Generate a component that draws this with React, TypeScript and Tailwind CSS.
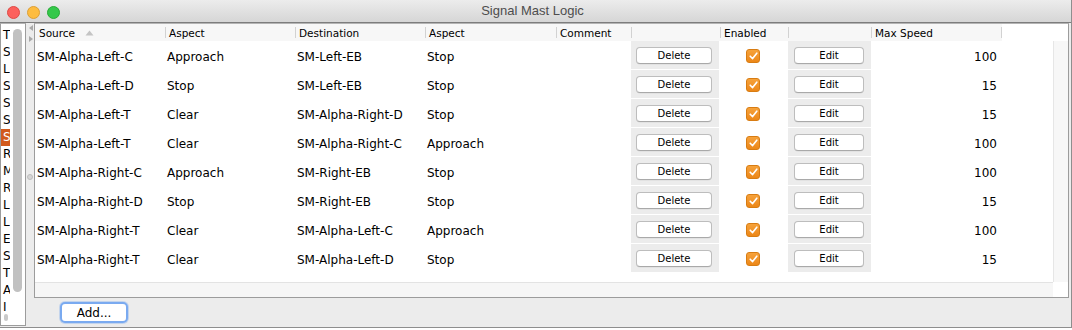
import React from "react";

interface Logic {
  source: string;
  srcAspect: string;
  dest: string;
  destAspect: string;
  speed: number;
}

const rows: Logic[] = [
  { source: "SM-Alpha-Left-C", srcAspect: "Approach", dest: "SM-Left-EB", destAspect: "Stop", speed: 100 },
  { source: "SM-Alpha-Left-D", srcAspect: "Stop", dest: "SM-Left-EB", destAspect: "Stop", speed: 15 },
  { source: "SM-Alpha-Left-T", srcAspect: "Clear", dest: "SM-Alpha-Right-D", destAspect: "Stop", speed: 15 },
  { source: "SM-Alpha-Left-T", srcAspect: "Clear", dest: "SM-Alpha-Right-C", destAspect: "Approach", speed: 100 },
  { source: "SM-Alpha-Right-C", srcAspect: "Approach", dest: "SM-Right-EB", destAspect: "Stop", speed: 100 },
  { source: "SM-Alpha-Right-D", srcAspect: "Stop", dest: "SM-Right-EB", destAspect: "Stop", speed: 15 },
  { source: "SM-Alpha-Right-T", srcAspect: "Clear", dest: "SM-Alpha-Left-C", destAspect: "Approach", speed: 100 },
  { source: "SM-Alpha-Right-T", srcAspect: "Clear", dest: "SM-Alpha-Left-D", destAspect: "Stop", speed: 15 },
];

const sideLetters = ["T", "S", "L", "S", "S", "S", "S", "R", "M", "R", "L", "L", "E", "S", "T", "A", "I"];

const sans = "font-['DejaVu_Sans',sans-serif]";

function HeaderCell({ w, label, first, sort }: { w: string; label: string; first?: boolean; sort?: boolean }) {
  return (
    <div className={`${w} h-full flex items-center shrink-0`}>
      {!first && <div className="w-px h-[11px] bg-[#d2d2d2]" />}
      <span className={`${first ? "pl-[4px]" : "pl-[3px]"} text-[10.5px] text-black pt-[2px]`}>{label}</span>
      {sort && (
        <svg width="9" height="6" viewBox="0 0 9 6" className="ml-[10px]">
          <path d="M4.5 0.5 L8.5 5.5 L0.5 5.5 Z" fill="#c4c4c4" />
        </svg>
      )}
    </div>
  );
}

function SmallButton({ label, w }: { label: string; w: string }) {
  return (
    <div
      className={`${w} h-[17px] rounded-[4px] bg-white border border-[#bdbdbd] border-b-[#a9a9a9] shadow-[0_0.5px_0.5px_rgba(0,0,0,0.08)] flex items-center justify-center text-[10px] text-black`}
    >
      {label}
    </div>
  );
}

function Check() {
  return (
    <div className="w-[14px] h-[14px] rounded-[3px] bg-gradient-to-b from-[#f6a23a] to-[#ec8716] border border-[#d87c12] flex items-center justify-center">
      <svg width="9" height="8" viewBox="0 0 9 8">
        <path d="M1.2 4.2 L3.6 6.6 L7.8 1.2" fill="none" stroke="white" strokeWidth="1.6" strokeLinecap="round" strokeLinejoin="round" />
      </svg>
    </div>
  );
}

export default function App() {
  return (
    <div className={`w-[1072px] h-[330px] bg-white ${sans}`}>
      <div className="w-[1072px] h-[328px] bg-[#ececec] border-r border-b border-[#8e8e8e] flex flex-col">
        {/* Title bar */}
        <div className="h-[23px] shrink-0 bg-gradient-to-b from-[#ececec] to-[#d6d6d6] border-b border-[#7d7d7d] flex items-center">
          <div className="flex items-center gap-[7px] pl-[7px] pt-[3px]">
            <div className="w-[13px] h-[13px] rounded-full bg-[#fc605c] border border-[#df4a45]" />
            <div className="w-[13px] h-[13px] rounded-full bg-[#fdbc40] border border-[#de9f34]" />
            <div className="w-[13px] h-[13px] rounded-full bg-[#34c84a] border border-[#27aa35]" />
          </div>
          <div className="flex-1 text-center font-['Liberation_Sans',sans-serif] text-[13px] text-[#4d4d4d] pr-[66px]">
            Signal Mast Logic
          </div>
        </div>

        {/* Body */}
        <div className="flex flex-1 min-h-0">
          {/* left list */}
          <div className="w-[26px] h-[303px] shrink-0 bg-white border border-[#9c9c9c] border-t-[#b4b4b4] flex flex-col">
            <div className="flex flex-1 min-h-0">
              <div className="w-[9px] overflow-hidden pt-[3px]">
                {sideLetters.map((l, i) => (
                  <div
                    key={i}
                    className={`h-[17px] leading-[17px] text-[12px] pl-[2px] ${i === 6 ? "bg-[#d25a1c] text-white" : "text-black"}`}
                  >
                    {l}
                  </div>
                ))}
              </div>
              <div className="flex-1 flex justify-center pt-[5px] pb-[22px]">
                <div className="w-[9px] h-full rounded-full bg-[#c1c1c1]" />
              </div>
            </div>
            <div className="h-[11px] shrink-0 flex items-start pl-[3px]">
              <div className="w-[4px] h-[7px] rounded-full bg-[#c9c9c9]" />
            </div>
          </div>

          {/* splitter */}
          <div className="w-[8px] shrink-0 flex flex-col items-center">
            <svg width="6" height="20" viewBox="0 0 6 20" className="mt-[1px] ml-[1px]">
              <path d="M1 4 L5 1 L5 7 Z" fill="#a9a9a9" />
              <path d="M5 15 L1 12 L1 18 Z" fill="#a9a9a9" />
            </svg>
            <div className="mt-[130px] w-[6px] h-[6px] rounded-full bg-[#d6d6d6] border border-[#bdbdbd]" />
          </div>

          {/* right side */}
          <div className="flex flex-col w-[1035px]">
            <div className="h-[275px] bg-white border border-[#9c9c9c] border-t-[#b4b4b4] flex flex-col">
              {/* header */}
              <div className="h-[17px] shrink-0 flex">
                <div className="flex h-full bg-[#f7f7f7]">
                  <HeaderCell w="w-[130px]" label="Source" first sort />
                  <HeaderCell w="w-[130px]" label="Aspect" />
                  <HeaderCell w="w-[130px]" label="Destination" />
                  <HeaderCell w="w-[131px]" label="Aspect" />
                  <HeaderCell w="w-[75px]" label="Comment" />
                  <HeaderCell w="w-[89px]" label="" />
                  <HeaderCell w="w-[68px]" label="Enabled" />
                  <HeaderCell w="w-[83px]" label="" />
                  <HeaderCell w="w-[130px]" label="Max Speed" />
                  <div className="h-full flex items-center">
                    <div className="w-px h-[11px] bg-[#d2d2d2]" />
                  </div>
                </div>
                <div className="flex-1 bg-white" />
              </div>

              {/* viewport */}
              <div className="flex flex-1 min-h-0">
                <div className="flex-1 flex flex-col">
                  {rows.map((r, i) => (
                    <div key={i} className="h-[29px] flex text-[12px] text-black">
                      <div className="w-[130px] pl-[2px] pt-[2px] flex items-center">{r.source}</div>
                      <div className="w-[130px] pl-[2px] pt-[2px] flex items-center">{r.srcAspect}</div>
                      <div className="w-[130px] pl-[2px] pt-[2px] flex items-center">{r.dest}</div>
                      <div className="w-[131px] pl-[2px] pt-[2px] flex items-center">{r.destAspect}</div>
                      <div className="w-[75px]" />
                      <div className="w-[89px] h-full bg-[#ececec] border-b border-r border-white flex items-center justify-center pt-[1px] pr-[2px]">
                        <SmallButton label="Delete" w="w-[76px]" />
                      </div>
                      <div className="w-[68px] flex items-center justify-center pr-[2px]">
                        <Check />
                      </div>
                      <div className="w-[83px] h-full bg-[#ececec] border-b border-white flex items-center justify-center pt-[1px] pr-[1px]">
                        <SmallButton label="Edit" w="w-[70px]" />
                      </div>
                      <div className="w-[130px] pt-[2px] flex items-center justify-end pr-[4px]">{r.speed}</div>
                    </div>
                  ))}
                </div>
                <div className="w-[15px] shrink-0 bg-[#f7f7f7] border-l border-[#e6e6e6]" />
              </div>

              {/* horizontal scroll track */}
              <div className="h-[15px] shrink-0 flex">
                <div className="flex-1 bg-[#f6f6f6] border-t border-[#e3e3e3]" />
                <div className="w-[15px] bg-white" />
              </div>
            </div>

            {/* button row */}
            <div className="flex pl-[26px] pt-[4px]">
              <div className="w-[68px] h-[21px] rounded-[5px] bg-white border-[2px] border-[#7aaaf0] shadow-[0_0_0_1px_rgba(120,168,238,0.35)] flex items-center justify-center text-[12px] text-black">
                Add...
              </div>
            </div>
          </div>
        </div>
      </div>
    </div>
  );
}
